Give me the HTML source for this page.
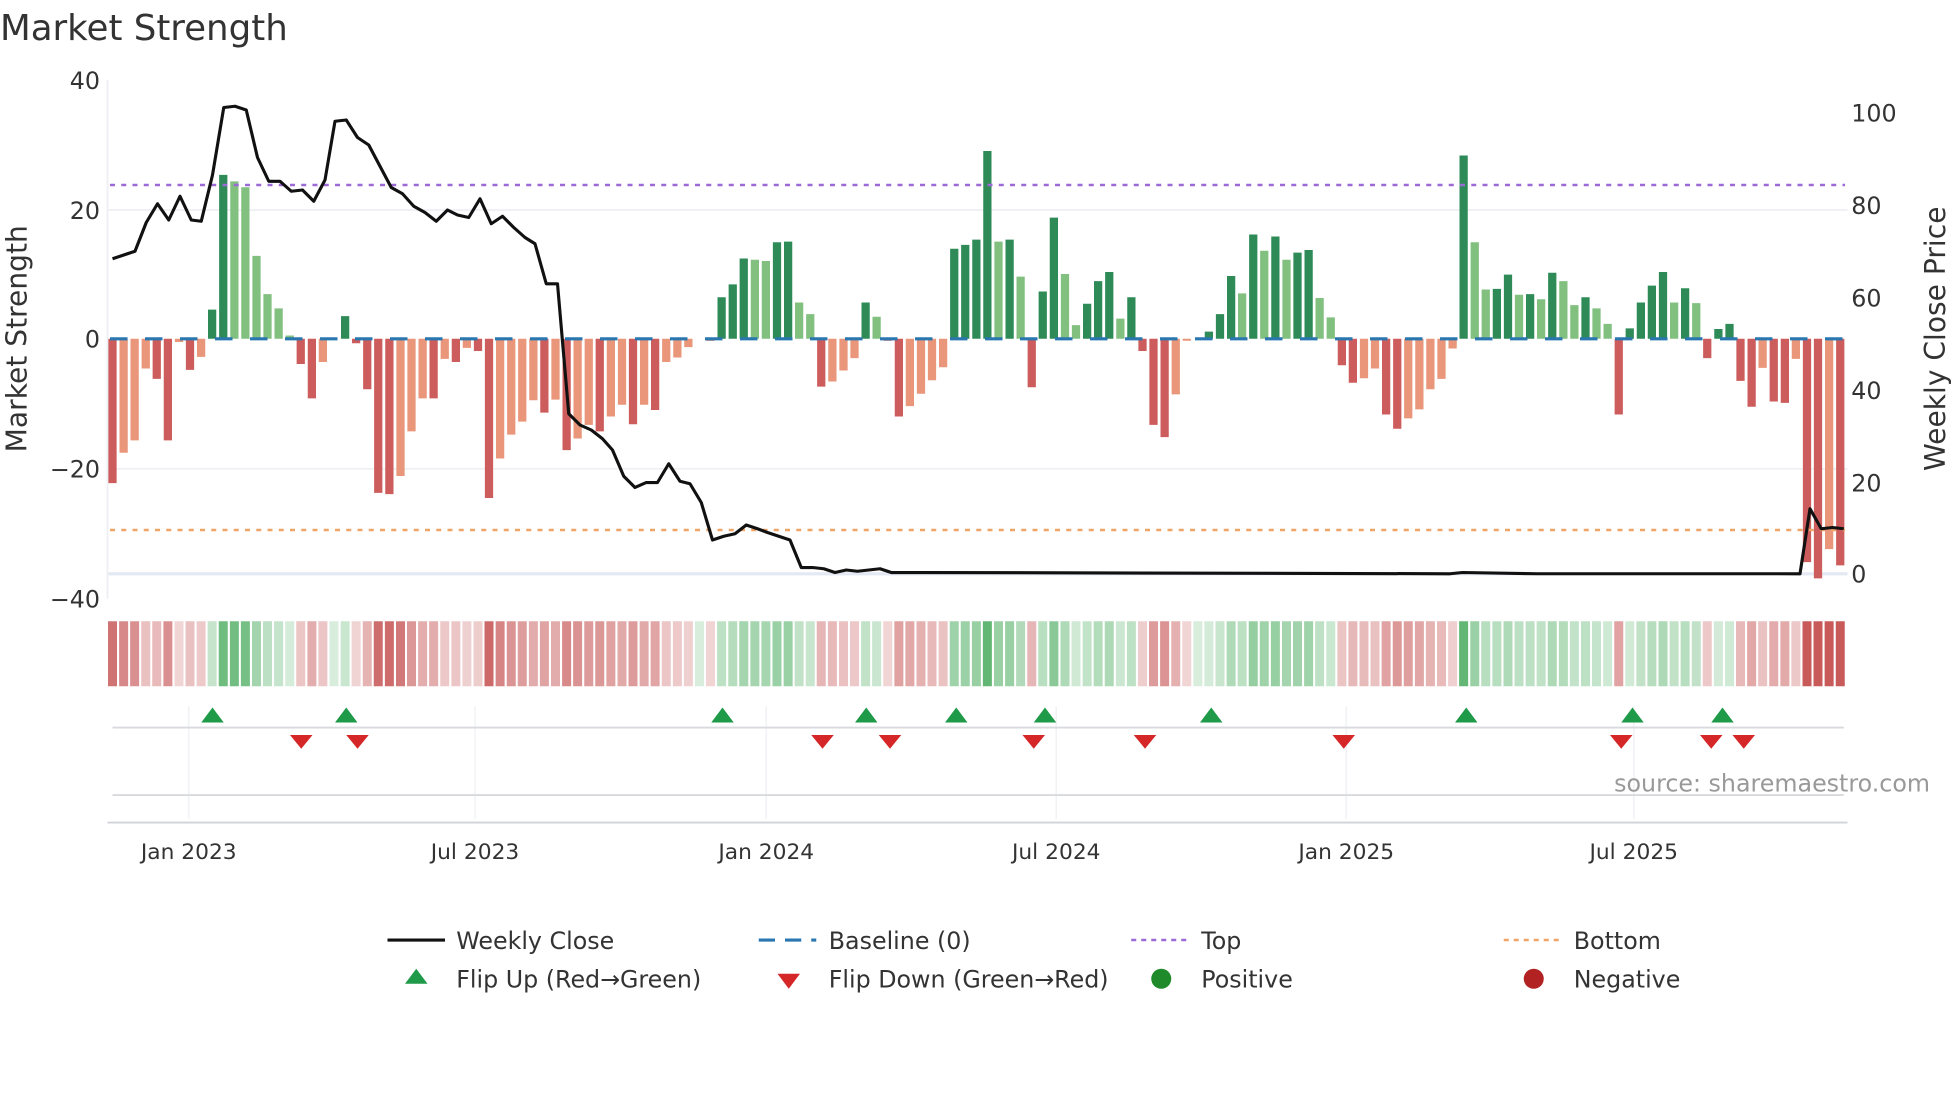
<!DOCTYPE html>
<html><head><meta charset="utf-8"><style>
html,body{margin:0;padding:0;background:#fff;width:1960px;height:1102px;overflow:hidden}
svg{display:block;font-family:"DejaVu Sans","Liberation Sans",sans-serif}
</style></head><body>
<svg id="s" width="1960" height="1102" viewBox="0 0 1568 881.6" xmlns="http://www.w3.org/2000/svg">
<rect width="1568" height="882" fill="#fff"/>
<text x="0" y="32" font-size="28.5" fill="#333">Market Strength</text>
<g stroke="#eef0f4" stroke-width="1.5">
<line x1="86" y1="168" x2="1478" y2="168"/><line x1="86" y1="375" x2="1478" y2="375"/>
</g>
<line x1="86" y1="459" x2="1478" y2="459" stroke="#e3e9f2" stroke-width="2.5"/>
<line x1="86" y1="64" x2="86" y2="479" stroke="#eef0f4" stroke-width="1.5"/>
<g font-size="19" fill="#333" text-anchor="end">
<text x="80" y="71">40</text><text x="80" y="175">20</text><text x="80" y="278">0</text><text x="80" y="382">−20</text><text x="80" y="486">−40</text>
</g>
<g font-size="19" fill="#333">
<text x="1481" y="97">100</text><text x="1481" y="171">80</text><text x="1481" y="245">60</text><text x="1481" y="319">40</text><text x="1481" y="393">20</text><text x="1481" y="466">0</text>
</g>
<text transform="translate(21,271) rotate(-90)" font-size="22.5" fill="#333" text-anchor="middle">Market Strength</text>
<text transform="translate(1556,271) rotate(-90)" font-size="22.5" fill="#333" text-anchor="middle">Weekly Close Price</text>
<g id="bars"></g>
<g id="heat"></g>
<line x1="88" y1="148" x2="1476" y2="148" stroke="#9b6ad6" stroke-width="2" stroke-dasharray="4,5"/>
<line x1="88" y1="424" x2="1476" y2="424" stroke="#efa468" stroke-width="2" stroke-dasharray="4,5"/>
<line x1="88" y1="271" x2="1476" y2="271" stroke="#2a77b0" stroke-width="2.5" stroke-dasharray="14,14"/>
<polyline fill="none" stroke="#111" stroke-width="2.5" stroke-linejoin="round" points="90,207 108,201 117,178 126,163 135,176 144,157 153,176 161,177 170,140 179,86 188,85 197,88 206,126 215,145 224,145 233,153 242,152 251,161 260,144 268,97 277,96 286,110 295,116 304,133 313,150 322,155 331,165 340,170 349,177 358,168 366,172 375,174 384,159 393,179 402,173 411,182 420,190 428,195 437,227 446,227 455,331 464,340 473,344 482,351 490,360 499,381 508,390 517,386 526,386 535,371 544,385 552,387 561,402 570,432 579,429 588,427 597,420 606,423 614,426 623,429 632,432 641,454 650,454 659,455 668,458 677,456 686,457 695,456 704,455 713,458 722,458 740,458 1160,459 1170,458 1230,459 1440,459 1448,407 1457,423 1466,422 1475,423"/>
<g stroke="#f0f2f5" stroke-width="1.2">
<line x1="151" y1="565" x2="151" y2="655"/><line x1="380" y1="565" x2="380" y2="655"/><line x1="613" y1="565" x2="613" y2="655"/><line x1="845" y1="565" x2="845" y2="655"/><line x1="1077" y1="565" x2="1077" y2="655"/><line x1="1307" y1="565" x2="1307" y2="655"/>
</g>
<line x1="90" y1="582" x2="1475" y2="582" stroke="#d8dadd" stroke-width="1.5"/>
<line x1="90" y1="636" x2="1475" y2="636" stroke="#d8dadd" stroke-width="1.5"/>
<line x1="86" y1="658" x2="1478" y2="658" stroke="#d0d3d8" stroke-width="1.5"/>
<g id="mk"></g>
<text x="1544" y="633" font-size="19" fill="#999" text-anchor="end">source: sharemaestro.com</text>
<g font-size="17.4" fill="#333" text-anchor="middle">
<text x="151" y="687">Jan 2023</text><text x="380" y="687">Jul 2023</text><text x="613" y="687">Jan 2024</text><text x="845" y="687">Jul 2024</text><text x="1077" y="687">Jan 2025</text><text x="1307" y="687">Jul 2025</text>
</g>
<g font-size="19" fill="#333">
<line x1="310" y1="752" x2="356" y2="752" stroke="#111" stroke-width="2.5"/><text x="365" y="759">Weekly Close</text>
<line x1="607" y1="752" x2="653" y2="752" stroke="#2a77b0" stroke-width="2.5" stroke-dasharray="13,8"/><text x="663" y="759">Baseline (0)</text>
<line x1="905" y1="752" x2="951" y2="752" stroke="#9b6ad6" stroke-width="2" stroke-dasharray="4,4"/><text x="961" y="759">Top</text>
<line x1="1203" y1="752" x2="1249" y2="752" stroke="#efa468" stroke-width="2" stroke-dasharray="4,4"/><text x="1259" y="759">Bottom</text>
<polygon points="333,775 342,787 324,787" fill="#1f9a48"/><text x="365" y="790">Flip Up (Red→Green)</text>
<polygon points="622,779 640,779 631,791" fill="#d62728"/><text x="663" y="790">Flip Down (Green→Red)</text>
<circle cx="929" cy="783" r="8" fill="#1f8a2a"/><text x="961" y="790">Positive</text>
<circle cx="1227" cy="783" r="8" fill="#b22222"/><text x="1259" y="790">Negative</text>
</g>
</svg>
<script>
var v=[-22.3,-17.6,-15.7,-4.6,-6.2,-15.7,-0.5,-4.8,-2.8,4.5,25.3,24.3,23.4,12.8,6.9,4.7,0.5,-3.9,-9.2,-3.6,0,3.5,-0.7,-7.8,-23.8,-24,-21.2,-14.3,-9.2,-9.2,-3.1,-3.6,-1.4,-1.9,-24.6,-18.5,-14.8,-12.8,-9.5,-11.4,-9.4,-17.2,-15.4,-13.3,-14.3,-12,-10.2,-13.2,-10.2,-11,-3.6,-2.9,-1.3,0,-0.3,6.4,8.4,12.4,12.2,12,14.9,15,5.6,3.8,-7.4,-6.6,-4.9,-3,5.6,3.4,-0.3,-12,-10.4,-8.5,-6.4,-4.4,13.9,14.5,15.3,29,15,15.3,9.6,-7.5,7.3,18.7,10,2.1,5.4,8.9,10.3,3.1,6.4,-1.9,-13.3,-15.2,-8.6,-0.3,0,1.1,3.8,9.7,7,16.1,13.6,15.8,12.2,13.3,13.7,6.3,3.3,-4.1,-6.8,-6.1,-4.6,-11.7,-13.9,-12.3,-10.9,-7.8,-6.2,-1.5,28.3,14.9,7.6,7.7,9.9,6.8,6.9,6.1,10.2,8.9,5.2,6.4,4.7,2.3,-11.7,1.6,5.6,8.2,10.3,5.6,7.8,5.5,-3,1.5,2.3,-6.5,-10.5,-4.5,-9.7,-9.9,-3.1,-34.5,-37,-32.5,-35];
var b='',h='';
for(var i=0;i<v.length;i++){
 var x=90+i*8.86,val=v[i],u=5.18,c;
 var prev=i>0?v[i-1]:0;
 if(val>=0){c=(val>=prev)?'#2e8b57':'#82c080';}else{c=(val<=prev)?'#cd5c5c':'#e9967a';}
 var hgt=Math.abs(val)*u;
 if(hgt>0.3){b+='<rect x="'+(x-3.3).toFixed(1)+'" y="'+(val>=0?271-hgt:271).toFixed(1)+'" width="6.6" height="'+hgt.toFixed(1)+'" fill="'+c+'"/>';}
 var t=Math.min(1,Math.abs(val)/28);var a=0.25+0.75*t;
 var base=val>=0?[99,183,116]:[200,90,90];
 var col='rgb('+base.map(function(k){return Math.round(255-(255-k)*a)}).join(',')+')';
 h+='<rect x="'+(x-3.6).toFixed(1)+'" y="497" width="7.2" height="52" fill="'+col+'"/>';
}
document.getElementById('bars').innerHTML=b;
document.getElementById('heat').innerHTML=h;
var up=[170,277,578,693,765,836,969,1173,1306,1378],dn=[241,286,658,712,827,916,1075,1297,1369,1395],m='';
up.forEach(function(x){m+='<polygon points="'+x+',566 '+(x+9)+',578 '+(x-9)+',578" fill="#1f9a48"/>'});
dn.forEach(function(x){m+='<polygon points="'+(x-9)+',588 '+(x+9)+',588 '+x+',599" fill="#d62728"/>'});
document.getElementById('mk').innerHTML=m;
</script>
</body></html>
